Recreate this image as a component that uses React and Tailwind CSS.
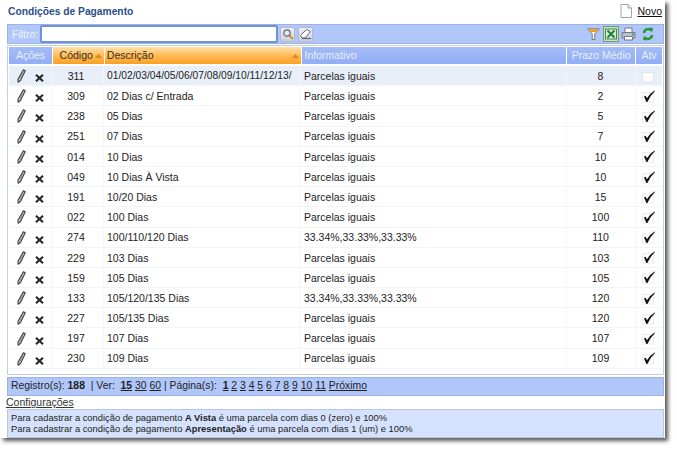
const rows = [
  ["311", "01/02/03/04/05/06/07/08/09/10/11/12/13/", "Parcelas iguais", "8", false],
  ["309", "02 Dias c/ Entrada", "Parcelas iguais", "2", true],
  ["238", "05 Dias", "Parcelas iguais", "5", true],
  ["251", "07 Dias", "Parcelas iguais", "7", true],
  ["014", "10 Dias", "Parcelas iguais", "10", true],
  ["049", "10 Dias À Vista", "Parcelas iguais", "10", true],
  ["191", "10/20 Dias", "Parcelas iguais", "15", true],
  ["022", "100 Dias", "Parcelas iguais", "100", true],
  ["274", "100/110/120 Dias", "33.34%,33.33%,33.33%", "110", true],
  ["229", "103 Dias", "Parcelas iguais", "103", true],
  ["159", "105 Dias", "Parcelas iguais", "105", true],
  ["133", "105/120/135 Dias", "33.34%,33.33%,33.33%", "120", true],
  ["227", "105/135 Dias", "Parcelas iguais", "120", true],
  ["197", "107 Dias", "Parcelas iguais", "107", true],
  ["230", "109 Dias", "Parcelas iguais", "109", true],
];

function Pencil() {
  return (
    <svg width="9" height="14" viewBox="0 0 9 14" className="shrink-0">
      <path d="M6.4 .8 L8.2 1.8 L3.6 11.2 L1.2 13.2 L1 10.2 Z" fill="#e8e8e8" stroke="#444" strokeWidth="1.2" strokeLinejoin="round" />
      <path d="M6.4 2 L2.6 10.4" stroke="#777" strokeWidth=".8" />
    </svg>
  );
}
function Cross() {
  return (
    <svg width="9" height="8" viewBox="0 0 9 8" className="shrink-0">
      <path d="M1 .8 L8 7.2 M8 .8 L1 7.2" stroke="#2a2a2a" strokeWidth="2.2" />
    </svg>
  );
}
function Check({ on }) {
  return (
    <svg width="14" height="13" viewBox="0 0 14 13">
      <rect x=".5" y="2.5" width="11" height="9.5" fill="#fdfdfd" stroke={on ? "#ececec" : "#e2e6ec"} />
      {on && <path d="M2 6.5 L3.6 5.8 L5 8.2 Q7.6 3.4 12.6 .4 L13 .9 Q8.6 5 5.4 12 L4.4 12 Z" fill="#111" />}
    </svg>
  );
}
function Arrow() {
  return (
    <svg width="7" height="4" viewBox="0 0 7 4" className="shrink-0">
      <path d="M0 4 L3.5 0 L7 4 Z" fill="#d98a1e" />
    </svg>
  );
}
function ToolBtn({ children }) {
  return (
    <div className="w-[15px] h-[15px] bg-gradient-to-b from-[#eef0f6] to-[#c9cfdf] border border-[#b3b9cc] rounded-[2px] flex items-center justify-center">
      {children}
    </div>
  );
}

const blueHead = "bg-gradient-to-b from-[#a3bbf7] to-[#92aef5] text-[#e9effd]";
const orangeHead = "bg-gradient-to-b from-[#ffe0a8] via-[#ffbb55] to-[#fba01c] text-[#33302a]";

export default function App() {
  return (
    <div className="w-[677px] h-[450px] bg-white text-[10.5px] leading-none text-[#222] relative overflow-hidden" style={{ fontFamily: '"Liberation Sans", Arial, sans-serif' }}>
      <div className="w-[665px] h-[438px] bg-white shadow-[3px_3px_4px_rgba(0,0,0,0.65)] pl-[7px] pr-px flex flex-col">
        <div className="h-[24px] flex items-center justify-between shrink-0 pr-[2px]">
          <span className="font-bold text-[#2b4d8c] text-[10.25px] pl-px">Condições de Pagamento</span>
          <div className="flex items-center gap-[5px] -translate-y-px">
            <svg width="12" height="14" viewBox="0 0 12 14">
              <path d="M1 .5 H8 L11.5 4 V13.5 H1 Z" fill="#fff" stroke="#9aa7b8" />
              <path d="M8 .5 V4 H11.5" fill="#dde4ee" stroke="#9aa7b8" />
            </svg>
            <span className="underline text-[#111] text-[10.5px]">Novo</span>
          </div>
        </div>

        <div className="h-[20px] shrink-0 bg-[#b1c7fa] border border-[#9db2e2] flex items-center pl-[4px] pr-[9px]">
          <span className="text-[#eef3ff] mr-[2px]">Filtro:</span>
          <div className="w-[238px] h-[18px] bg-white border-2 border-[#6f93db] rounded-[2px] mr-[2px]" />
          <div className="flex gap-[3px]">
            <ToolBtn>
              <svg width="12" height="12" viewBox="0 0 12 12">
                <circle cx="5" cy="5" r="3.2" fill="#dfe7f3" stroke="#667" strokeWidth="1.2" />
                <path d="M7.5 7.5 L11 11" stroke="#d89a28" strokeWidth="2.2" />
              </svg>
            </ToolBtn>
            <ToolBtn>
              <svg width="13" height="12" viewBox="0 0 13 12">
                <path d="M1.5 7.5 L7.5 1.5 L11.5 3.5 L6 10 H3 Z" fill="#fff" stroke="#667" />
                <path d="M3 10.5 H12" stroke="#667" strokeWidth="1.2" />
              </svg>
            </ToolBtn>
          </div>
          <div className="ml-auto flex items-center gap-[2px]">
            <svg width="13" height="12" viewBox="0 0 13 12" className="mr-px">
              <path d="M.5 .8 H12.5 L7.8 6 V11.5 H5.2 V6 Z" fill="#f8f8f8" stroke="#777" />
              <path d="M1.5 1.2 H11.5 L9 4 H4 Z" fill="#f59a1b" />
            </svg>
            <svg width="16" height="16" viewBox="0 0 16 16">
              <rect x=".5" y=".5" width="15" height="15" fill="#cfe0c8" stroke="#6c9a6c" />
              <rect x="2.5" y="3" width="11" height="10" fill="#d8ecd6" stroke="#3b8f4e" />
              <path d="M4.5 4.5 L11.5 11.5 M11.5 4.5 L4.5 11.5" stroke="#1f7f3a" strokeWidth="2" />
            </svg>
            <svg width="15" height="14" viewBox="0 0 15 14">
              <path d="M4 5 V1 H11 V5" fill="#fff" stroke="#778" />
              <path d="M1 5.5 H14 V11 H1 Z" fill="#b8c0cc" stroke="#778" />
              <path d="M3.5 9.5 H11.5 V13 H3.5 Z" fill="#fff" stroke="#778" />
              <circle cx="12" cy="7.5" r="1" fill="#2c9a3a" />
            </svg>
            <svg width="12" height="14" viewBox="0 0 12 14" className="ml-[4px]">
              <path d="M2 6 A4 4 0 0 1 9 3.5" fill="none" stroke="#1c9a2c" strokeWidth="2.4" />
              <path d="M7 .5 L11 1 L10 5.5 Z" fill="#1c9a2c" />
              <path d="M10 8 A4 4 0 0 1 3 10.5" fill="none" stroke="#1c9a2c" strokeWidth="2.4" />
              <path d="M5 13.5 L1 13 L2 8.5 Z" fill="#1c9a2c" />
            </svg>
          </div>
        </div>

        <div className="h-[330px] mt-px shrink-0 border border-[#c3cede] pl-px pr-px pt-px flex flex-col">
          <div className="h-[17px] shrink-0 flex gap-px items-stretch">
            <div className={`w-[43px] flex items-center justify-center ${blueHead}`}>Ações</div>
            <div className={`w-[51px] flex items-center justify-end gap-[2px] pr-[2px] ${orangeHead}`}>Código <Arrow /></div>
            <div className={`w-[196px] flex items-center justify-between pl-[2px] pr-[2px] ${orangeHead}`}>Descrição <Arrow /></div>
            <div className={`w-[265px] flex items-center pl-[3px] ${blueHead}`}>Informativo</div>
            <div className={`w-[68px] flex items-center justify-center ${blueHead}`}>Prazo Médio</div>
            <div className={`w-[26px] flex items-center justify-center ${blueHead}`}>Atv</div>
          </div>
          <div className="mt-[2px] flex flex-col">
            {rows.map((r, i) => (
              <div key={r[0]} className={`h-[20.2px] pt-px flex border-b border-[#f1f4f9] items-stretch ${i === 0 ? "bg-[#e9eff9]" : "bg-white"}`}>
                <div className="w-[44px] flex items-center justify-center gap-[9px] border-r border-[#f3f5fa]">
                  <Pencil />
                  <span className="translate-y-[2px] flex"><Cross /></span>
                </div>
                <div className="w-[51px] flex items-center justify-center border-r border-[#f3f5fa] pr-[4px]">{r[0]}</div>
                <div className={`w-[197px] flex items-center pl-[3px] border-r border-[#f3f5fa] whitespace-nowrap overflow-hidden ${i === 0 ? "text-[10.25px]" : ""}`}>{r[1]}</div>
                <div className="w-[266px] flex items-center pl-[3px] border-r border-[#f3f5fa]">{r[2]}</div>
                <div className="w-[69px] flex items-center justify-center border-r border-[#f3f5fa] pr-px">{r[3]}</div>
                <div className="w-[25px] flex items-center justify-center pl-px"><Check on={r[4]} /></div>
              </div>
            ))}
          </div>
        </div>

        <div className="h-[19px] mt-[2px] shrink-0 bg-[#b1c7fa] border border-[#9db2e2] flex items-center pl-[3px] whitespace-pre text-[#222] text-[10.4px]">
          <span>Registro(s): <b>188</b>  | Ver:  <b className="underline">15</b> <u>30</u> <u>60</u> | Página(s):  <b className="underline">1</b> <u>2</u> <u>3</u> <u>4</u> <u>5</u> <u>6</u> <u>7</u> <u>8</u> <u>9</u> <u>10</u> <u>11</u> <u>Próximo</u></span>
        </div>

        <div className="h-[13px] shrink-0 flex items-center text-[#333] -ml-px">
          <span className="underline">Configurações</span>
        </div>

        <div className="h-[29px] shrink-0 bg-[#d5e2fd] border border-[#b7c6de] pl-[3px] flex flex-col justify-center text-[9.35px] leading-[10.5px] text-[#222]">
          <div>Para cadastrar a condição de pagamento <b>A Vista</b> é uma parcela com dias 0 (zero) e 100%</div>
          <div>Para cadastrar a condição de pagamento <b>Apresentação</b> é uma parcela com dias 1 (um) e 100%</div>
        </div>
      </div>
    </div>
  );
}
